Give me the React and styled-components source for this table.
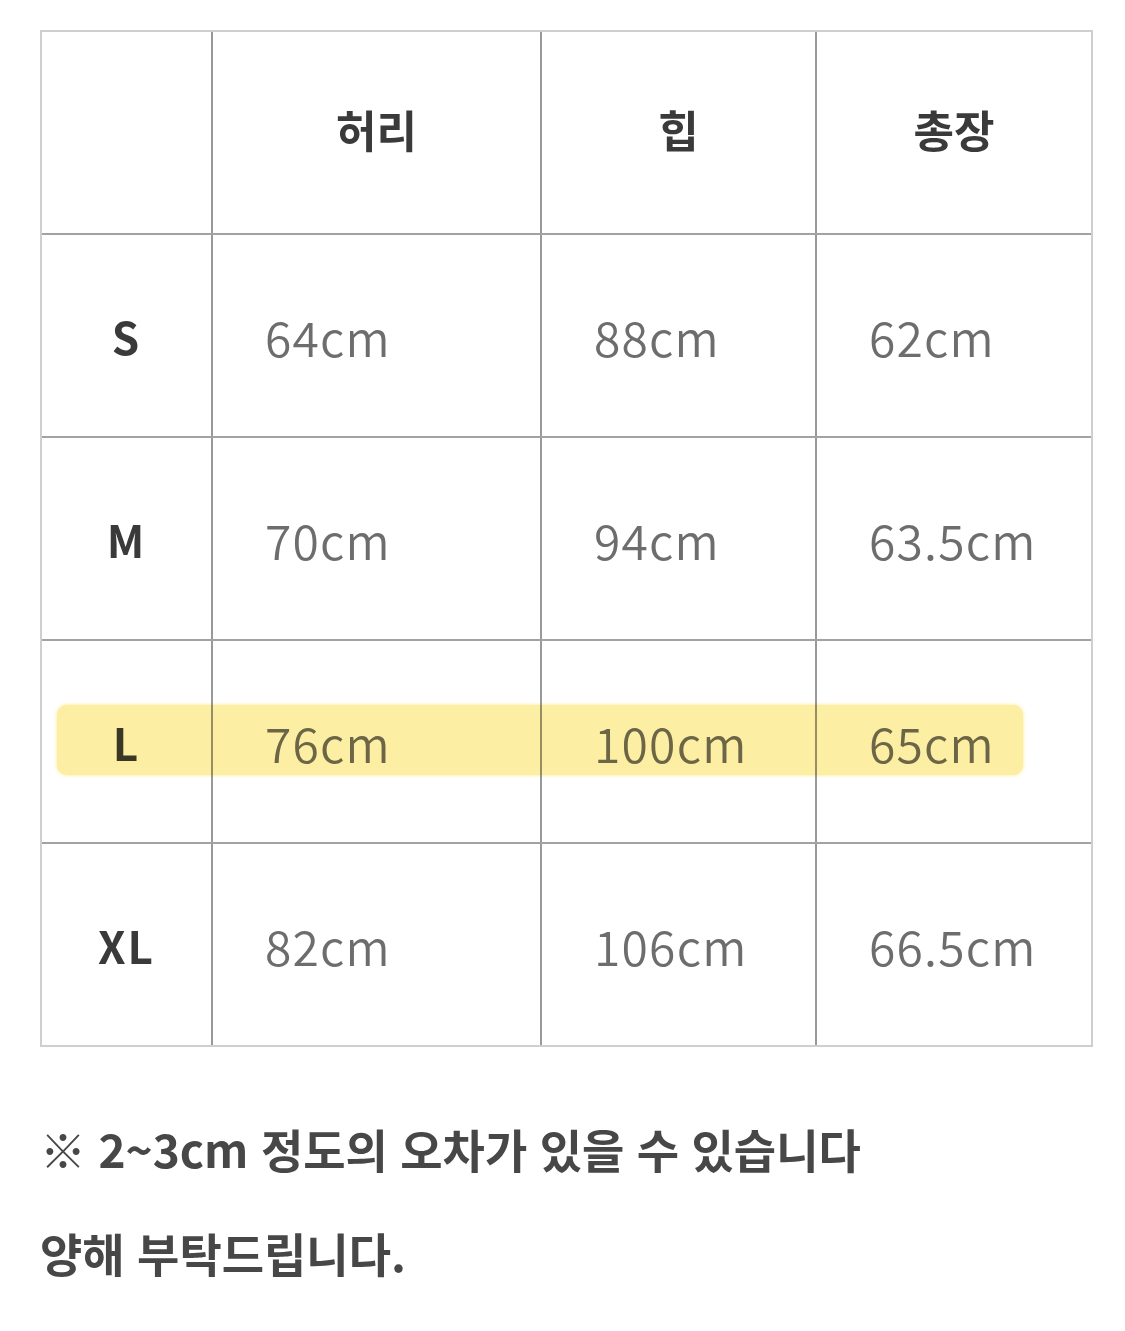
import styled, { createGlobalStyle } from 'styled-components';

const columns = ['허리', '힙', '총장'];

const sizeRows = [
  { size: 'S', values: ['64cm', '88cm', '62cm'] },
  { size: 'M', values: ['70cm', '94cm', '63.5cm'] },
  { size: 'L', values: ['76cm', '100cm', '65cm'], highlight: true },
  { size: 'XL', values: ['82cm', '106cm', '66.5cm'] },
];

const GlobalStyle = createGlobalStyle`
  html, body {
    margin: 0;
    padding: 0;
    background: #ffffff;
  }
  body {
    font-family: "Noto Sans CJK KR", "Noto Sans", sans-serif;
  }
`;

const App = () => {
  return (
    <Page>
      <GlobalStyle />
      <Table>
        <Row>
          <LabelCell />
          {columns.map((col) => (
            <HeadCell key={col}>{col}</HeadCell>
          ))}
        </Row>
        {sizeRows.map((row) => (
          <Row key={row.size} $highlight={row.highlight}>
            <LabelCell>{row.size}</LabelCell>
            {row.values.map((v, i) => (
              <ValueCell key={i}>{v}</ValueCell>
            ))}
          </Row>
        ))}
      </Table>
      <Notes>
        <Note>※ 2~3cm 정도의 오차가 있을 수 있습니다</Note>
        <Note>양해 부탁드립니다.</Note>
      </Notes>
    </Page>
  );
};

export default App;

const Page = styled.div`
  width: 1125px;
  height: 1331px;
  padding: 30px 32px 0 40px;
  box-sizing: border-box;
  background: #ffffff;
`;

const Table = styled.div`
  width: 1053px;
  border: 2px solid #cfcfcf;
  box-sizing: border-box;
  display: flex;
  flex-direction: column;
`;

const Row = styled.div`
  position: relative;
  display: grid;
  grid-template-columns: 169px 329px 275px 1fr;
  height: 201px;

  & + & {
    border-top: 2px solid #a2a2a2;
  }

  ${({ $highlight }) =>
    $highlight &&
    `
    &::after {
      content: '';
      position: absolute;
      left: 15px;
      width: 966px;
      top: 64px;
      height: 70px;
      border-radius: 10px;
      background: #fcefa4;
      box-shadow: 0 0 3px 1px rgba(252, 239, 164, 0.8);
      mix-blend-mode: multiply;
      pointer-events: none;
    }
  `}
`;

const Cell = styled.div`
  display: flex;
  align-items: center;
  box-sizing: border-box;

  & + & {
    border-left: 2px solid #999999;
  }
`;

const LabelCell = styled(Cell)`
  justify-content: center;
  font-size: 44px;
  font-weight: 700;
  color: #3a3a3a;
  letter-spacing: 2px;
`;

const HeadCell = styled(Cell)`
  justify-content: center;
  font-size: 44px;
  font-weight: 700;
  color: #3a3a3a;
  padding-bottom: 8px;
`;

const ValueCell = styled(Cell)`
  padding-left: 52px;
  font-size: 48px;
  font-weight: 350;
  color: #6d6d6d;
  letter-spacing: 1.2px;
`;

const Notes = styled.div`
  margin-top: 72px;
  display: flex;
  flex-direction: column;
  gap: 46px;
`;

const Note = styled.div`
  font-size: 46px;
  font-weight: 700;
  color: #474747;
  line-height: 58px;
  word-spacing: 2px;
`;
